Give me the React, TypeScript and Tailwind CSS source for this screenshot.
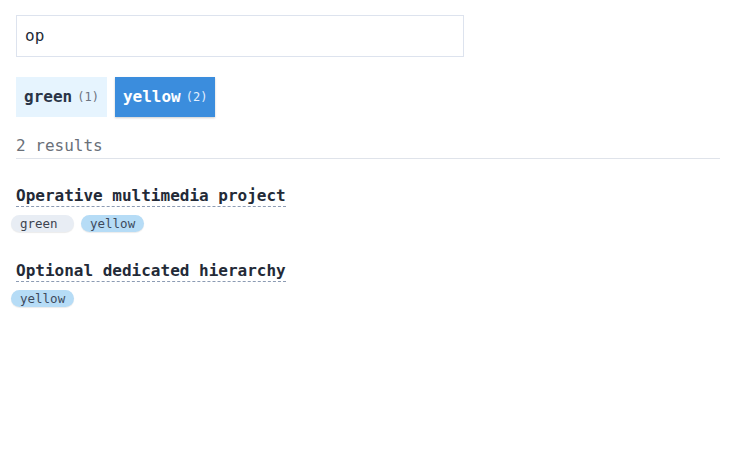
const results = [
  { title: "Operative multimedia project", tags: ["green", "yellow"] },
  { title: "Optional dedicated hierarchy", tags: ["yellow"] },
];

const facets = [
  { name: "green", count: 1, active: false },
  { name: "yellow", count: 2, active: true },
];

function Tag({ name }: { name: string }) {
  const cls =
    name === "yellow"
      ? "bg-[#b6dcf6] text-[#3d4a5c]"
      : "bg-[#e8edf4] text-[#3d4450]";
  return (
    <span
      className={`inline-block h-[17px] min-w-[63px] rounded-full px-[9px] text-[12.5px] leading-[17px] shadow-[0_1px_1px_rgba(0,0,0,0.08)] ${cls}`}
    >
      {name}
    </span>
  );
}

export default function App() {
  return (
    <div className="min-h-[469px] bg-white px-4 pt-[15px] font-['DejaVu_Sans_Mono',monospace] text-[#232a37]">
      <div className="w-[704px]">
        <div className="flex h-[42px] w-[448px] items-center border border-[#dde3ee] px-2 text-[16px]">
          op
        </div>

        <div className="mt-5 flex gap-2">
          {facets.map((f) => (
            <div
              key={f.name}
              className={`flex h-10 items-center gap-[5px] px-2 text-[16px] font-semibold ${
                f.active
                  ? "bg-[#3b8ddd] text-white shadow-[0_1px_2px_rgba(0,0,0,0.2)]"
                  : "bg-[#e6f4fe] text-[#2a3447]"
              }`}
            >
              <span>{f.name}</span>
              <span
                className={`text-[12px] font-normal ${
                  f.active ? "text-[#e3efff]" : "text-[#6b7380]"
                }`}
              >
                ({f.count})
              </span>
            </div>
          ))}
        </div>

        <div className="mt-[19px] border-b border-[#dfe3ea] pb-[2px] text-[16px] leading-[20px] text-[#6a7079]">
          2 results
        </div>

        <div className="mt-[27px] flex flex-col gap-[29px]">
          {results.map((r) => (
            <div key={r.title}>
              <div className="text-[16px] font-bold leading-[20px]">
                <span className="border-b border-dashed border-[#8c9bb3] pb-[1px]">
                  {r.title}
                </span>
              </div>
              <div className="-ml-[5px] mt-[9px] flex gap-[7px]">
                {r.tags.map((t) => (
                  <Tag key={t} name={t} />
                ))}
              </div>
            </div>
          ))}
        </div>
      </div>
    </div>
  );
}
